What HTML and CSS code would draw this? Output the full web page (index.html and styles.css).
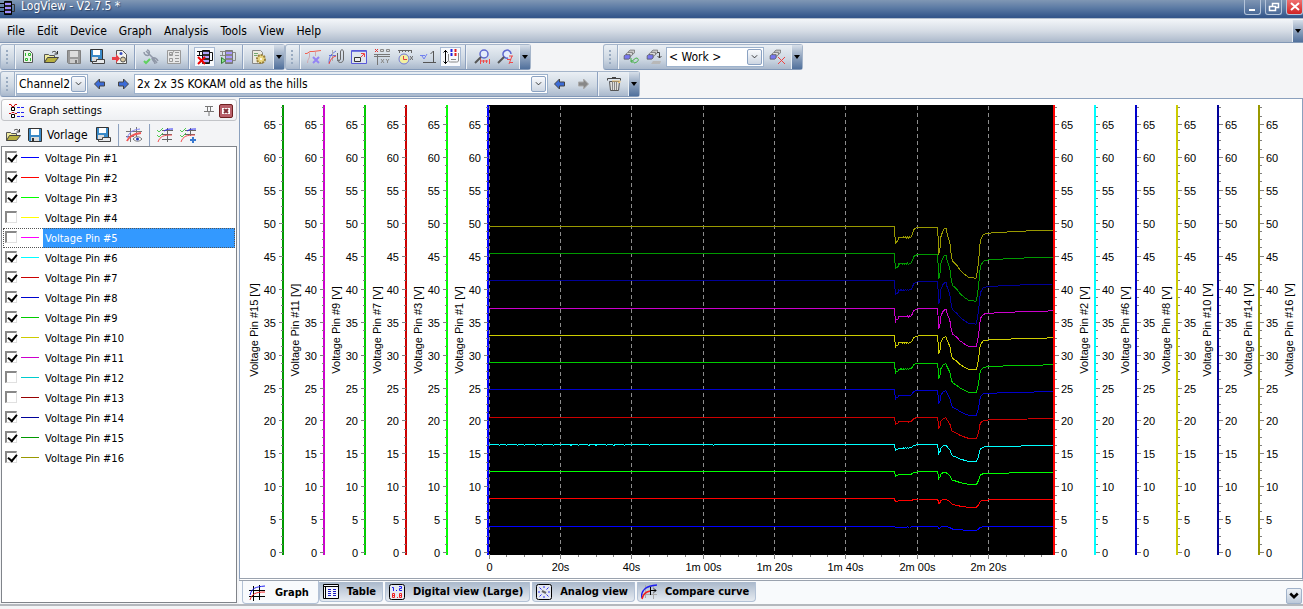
FILE: index.html
```html
<!DOCTYPE html>
<html lang="en">
<head>
    <meta charset="UTF-8">
    <meta name="viewport" content="width=device-width, initial-scale=1.0">
    <title>LogView</title>
    <link rel="stylesheet" href="styles.css">
</head>
<body>
    <!-- icons -->
    <svg class="icons">
        <symbol id="i-app" viewBox="0 0 16 16"><path d="M0 3.500h4M0 7.500h4M0 11.500h4" stroke="#000"/><path d="M4.500 1.500h7v13h-7z" fill="#222" stroke="#000"/><path d="M5 3h6v2H5zM5 7h6v2H5zM5 11h6v2H5z" fill="#a08cff"/><path d="M12 4.500h2.500v7H12" fill="none" stroke="#333"/></symbol>
        <symbol id="i-new" viewBox="0 0 16 16"><path d="M3.500 1.500h6l3 3v9h-9z" fill="#eef6ea" stroke="#555"/><path d="M5.500 4v3M8.500 4.500h2v2h-2zM5.500 9.500h2v2h-2zM10.500 9v3" fill="none" stroke="#2eb82e"/></symbol>
        <symbol id="i-open" viewBox="0 0 16 16"><path d="M1.500 13.500V5.500h4l1 1h5v2" fill="#eeeaa0" stroke="#555"/><path d="M1.500 13.500l3-5h11l-4 5z" fill="#b8b040" stroke="#444"/><path d="M9 3.500c2-2 4-1 5 1M14.500 2v3h-3" fill="none" stroke="#333"/></symbol>
        <symbol id="i-saveoff" viewBox="0 0 16 16"><path d="M1.500 1.500h13v13h-12l-1-1z" fill="#9a9a9a" stroke="#808080"/><path d="M4 2h8v6H4z" fill="#ddd"/><path d="M4 10h8v4H4z" fill="#ccc"/><path d="M9 11h2v3H9z" fill="#777"/></symbol>
        <symbol id="i-save" viewBox="0 0 16 16"><path d="M1.500 1.500h13v13h-12l-1-1z" fill="#3a8ac8" stroke="#333"/><path d="M4 2h8v6H4z" fill="#fff"/><path d="M4 10h8v4H4z" fill="#ddd"/><path d="M5 11h2v3H5z" fill="#333"/></symbol>
        <symbol id="i-saveas" viewBox="0 0 16 16"><path d="M1.500 .5h12v12h-12z" fill="#3a8ac8" stroke="#333"/><path d="M4 1h7v5H4z" fill="#fff"/><path d="M3 8h6v4H3z" fill="#ddd"/><path d="M7.500 10.500h8v4h-12v-2h4z" fill="#e8eaec" stroke="#444"/></symbol>
        <symbol id="i-export" viewBox="0 0 16 16"><path d="M4.500 1.500h6l4 4v9h-10z" fill="#f3f3ee" stroke="#555"/><path d="M0 8h4V5l4 4.500-4 4.500v-3H0z" fill="#e84048"/><circle cx="9" cy="4.500" r="1.500" fill="#3a50c0"/><circle cx="11" cy="10.500" r="2.500" fill="#d8c8a0" stroke="#555"/></symbol>
        <symbol id="i-tools" viewBox="0 0 16 16"><path d="M3 2l3 3 4 4 4 5M1 3c0 3 3 4 5 3M4 1c2 0 3 2 2 4M9 9c0 3 3 3 3 6M9 9c3-1 5 1 6 3" fill="none" stroke="#9098a8" stroke-width="1.500"/><path d="M1 12l2 2 4-4" fill="none" stroke="#60d060" stroke-width="2"/></symbol>
        <symbol id="i-form" viewBox="0 0 16 16"><path d="M1.500 1.500h13v13h-13z" fill="#e8e8e8" stroke="#999"/><path d="M3.500 3.500h3v3h-3zM9 3.500h4M9 6.500h4M3.500 9.500h3v3h-3zM9 9.500h4M9 12.500h4M4 5l1 1 3-4" fill="none" stroke="#999"/></symbol>
        <symbol id="i-disconnect" viewBox="0 0 16 16"><path d="M5.500 1.500h7v13h-7z" fill="#333" stroke="#111"/><path d="M6 3h6v2H6zM6 7h6v2H6zM6 11h6v2H6z" fill="#b0a4ff"/><path d="M0 2.500h5M2.500 3v3M0 6.500h5M13 3.500h2.500v8H13" fill="none" stroke="#111"/><path d="M1 8l7 7M8 8l-7 7" stroke="#f00000" stroke-width="2"/></symbol>
        <symbol id="i-connect" viewBox="0 0 16 16"><path d="M5.500 1.500h7v13h-7z" fill="#888" stroke="#777"/><path d="M6 3h6v2H6zM6 7h6v2H6zM6 11h6v2H6z" fill="#a898ff"/><path d="M0 2.500h5M2.500 3v3M0 6.500h5M13 3.500h2.500v8H13" fill="none" stroke="#888"/><path d="M1.500 8.500l4 3-4 3z" fill="#90e090" stroke="#308030"/></symbol>
        <symbol id="i-gear" viewBox="0 0 16 16"><path d="M1.500 1.500h8l2 2v11h-10z" fill="#ebeae0" stroke="#888"/><circle cx="10" cy="10" r="4" fill="#ecd880" stroke="#98803c" stroke-width="2" stroke-dasharray="2 1"/><circle cx="10" cy="10" r="1" fill="#fff"/><path d="M3 4.500h4M3 6.500h3" stroke="#70a870"/></symbol>
        <symbol id="i-curvex" viewBox="0 0 16 16"><path d="M0 4.500h2l3-2h3l8-1" fill="none" stroke="#f06050"/><path d="M4.500 4v3c0 3-2 3-2 7M10.500 3v4" fill="none" stroke="#d0a8b0"/><path d="M8 8l6 6M14 8l-6 6" stroke="#9484f4" stroke-width="2"/></symbol>
        <symbol id="i-clip" viewBox="0 0 16 16"><path d="M1 14c0-8 3-9 7-12M1 6.500h7" fill="none" stroke="#6070e0"/><path d="M4.500 1v11" stroke="#aaa"/><path d="M1 15c2-6 4-7 7-8" fill="none" stroke="#f04040"/><path d="M9.500 4v6c0 2 3 2 3 0V3c0-3 3-3 3 0v7c0 5-6 4-6 1" fill="none" stroke="#666"/></symbol>
        <symbol id="i-full" viewBox="0 0 16 16"><path d="M.5 1.500h15v13H.5z" fill="#dfe5ee" stroke="#5858d8"/><path d="M1 2.500h14" stroke="#7078e0" stroke-width="1"/><path d="M3.500 8.500h6v4h-6z" fill="#eee" stroke="#333"/><path d="M10 8l3-3M10 4.500h3.500V8" fill="none" stroke="#f04040"/></symbol>
        <symbol id="i-grid" viewBox="0 0 16 16"><path d="M6.500 .5h3v2h-3zM12.500 .5h3v2h-3z" fill="#ddd" stroke="#888"/><path d="M1 0l3 3M4 0L1 3" stroke="#e03030"/><path d="M0 5.500h16M0 7.500h16M3.500 5v11" stroke="#777"/><path d="M7 10l3 4M10 10l-3 4M12 10l1.500 2 1.500-2M13.500 12v2" fill="none" stroke="#888"/></symbol>
        <symbol id="i-clock" viewBox="0 0 16 16"><path d="M1 1.500h14M2.500 1v3M5.500 1v2M8.500 1v2M11.500 1v2M14.500 1v3" stroke="#666"/><circle cx="7" cy="10" r="5" fill="#f4f0a0" stroke="#7078d8"/><path d="M6.500 7v3.500H10" fill="none" stroke="#e04040"/><path d="M13 7l3 4M16 7l-3 4" stroke="#666"/></symbol>
        <symbol id="i-step" viewBox="0 0 16 16"><path d="M0 6.500h5M2 7l2 3 3-5" fill="none" stroke="#7080f0"/><path d="M3 13.500h13M13.500 13V2l-3 3" fill="none" stroke="#555"/></symbol>
        <symbol id="i-axes" viewBox="0 0 16 16"><path d="M2.500 1v14M.5 3.500l2-2 2 2M.5 12.500l2 2 2-2" fill="none" stroke="#000"/><path d="M5.500 5v6c0 2 1 2 2 2h6c1 0 2 0 2-2V4M8 10.500h5" fill="none" stroke="#888"/><path d="M8.500 0v8" stroke="#2020e0" stroke-width="2" stroke-dasharray="3 1"/><path d="M12.500 0v8" stroke="#e02020" stroke-width="2" stroke-dasharray="3 1"/></symbol>
        <symbol id="i-zoomx" viewBox="0 0 16 16"><circle cx="10" cy="5" r="4" fill="#e4ecfa" stroke="#5f68d0" stroke-width="1.500"/><path d="M7 8l-6 6" stroke="#555" stroke-width="2"/><path d="M7 12h7M6.500 10v5M9.500 11v3M12.500 11v3M15.500 10v5" stroke="#f04848"/></symbol>
        <symbol id="i-zoomy" viewBox="0 0 16 16"><path d="M14 5a4 4 0 1 0-3 4" fill="#e4ecfa" stroke="#5f68d0" stroke-width="1.500"/><path d="M7 8l-6 6" stroke="#555" stroke-width="2"/><path d="M12 7h4M10 10.500h4M13 13.500h3M12 15l3-8" stroke="#f04848"/></symbol>
        <symbol id="i-boxes" viewBox="0 0 16 16"><path d="M7.500 3l2-1.500h6V5l-2 1.500h-6z" fill="#ccc" stroke="#666"/><path d="M4.500 6l2-1.500h6V8l-2 1.500h-6z" fill="#ddd" stroke="#666"/><path d="M1.500 9l2-1.500h6V12l-2 1.500h-6z" fill="#7878f0" stroke="#555"/></symbol>
        <symbol id="i-boxload" viewBox="0 0 16 16"><use href="#i-boxes" width="12" height="12"/><path d="M8 12c3 0 3-3 6-3 2 1 2 4-3 5M8 9v4h3" fill="none" stroke="#40b040"/></symbol>
        <symbol id="i-boxsave" viewBox="0 0 16 16"><use href="#i-boxes" width="12" height="12"/><path d="M11 3.500h2.500V9M11.500 7l2 2 2-2" fill="none" stroke="#444"/><path d="M7 12h8l-1 3H5z" fill="#b8b8b8"/></symbol>
        <symbol id="i-boxdel" viewBox="0 0 16 16"><use href="#i-boxes" width="12" height="12"/><path d="M9 8l7 7M16 8l-7 7" stroke="#f04040"/></symbol>
        <symbol id="i-left" viewBox="0 0 12 12"><path d="M.5 6l5-5v3h5v4h-5v3z" fill="#3c6cd8" stroke="#444"/></symbol>
        <symbol id="i-right" viewBox="0 0 12 12"><path d="M11.500 6l-5-5v3h-5v4h5v3z" fill="#3c6cd8" stroke="#444"/></symbol>
        <symbol id="i-rightoff" viewBox="0 0 12 12"><path d="M11.500 6l-5-5v3h-5v4h5v3z" fill="#888" stroke="#aaa"/></symbol>
        <symbol id="i-trash" viewBox="0 0 16 16"><path d="M3.500 5.500h10l-1 9h-8z" fill="#e0e0dc" stroke="#555"/><path d="M1.500 4.500v-2h13v2M6 1.500h4" fill="none" stroke="#444"/><path d="M6.500 6v8M8.500 6v8M10.500 6v8" stroke="#888"/><path d="M6 5h8v1.500h-2" fill="none" stroke="#f0c878"/></symbol>
        <symbol id="i-drop" viewBox="0 0 8 8"><path d="M1 2h6L4 6z" fill="#000"/></symbol>
        <symbol id="i-chev" viewBox="0 0 8 8"><path d="M1 2l3 3 3-3" fill="none" stroke="#222"/></symbol>
        <symbol id="i-settings" viewBox="0 0 16 16"><path d="M0 1.500h2l1 2h2l1-2h2M0 10.500h2l1-1h2l1 1h2" fill="none" stroke="#d01010"/><path d="M2.500 4.500h3v3h-3zM2.500 11.500h3v3h-3z" fill="#fff" stroke="#000"/><path d="M8 4.500h3M12 4.500h3M8 9.500h3M12 9.500h3M8 13.500h3M12 13.500h3" stroke="#2020f0"/></symbol>
        <symbol id="i-pin" viewBox="0 0 12 12"><path d="M2 1.500h8M4.500 2v4M7.500 2v4M1 6.500h10M6 7v4" fill="none" stroke="#777"/></symbol>
        <symbol id="i-eye" viewBox="0 0 16 16"><path d="M4.500 1v14M10.500 0v10M0 4.500h16M0 9.500h8" stroke="#777"/><path d="M1 11C4 4 7 3 14 2" fill="none" stroke="#8080f0"/><path d="M1 14c2-5 6-7 14-8" fill="none" stroke="#f05858" stroke-width="2"/><path d="M7 12c3-3 6-3 9 0-3 3-6 3-9 0z" fill="#fff" stroke="#777"/><circle cx="11.500" cy="12" r="1.500" fill="#2838b0"/></symbol>
        <symbol id="i-curves" viewBox="0 0 16 16"><path d="M10.500 1v14M5 12.500h10M5 7.500h10M5 3.500h11" stroke="#666"/><path d="M7 4c3-2 5-2 9-2" fill="none" stroke="#3030f0"/><path d="M1 15c2-6 6-7 14-7" fill="none" stroke="#f05050"/><path d="M0 3l2 2 4-4M0 8l2 2 4-4" fill="none" stroke="#50c850"/></symbol>
        <symbol id="i-curvesadd" viewBox="0 0 16 16"><path d="M10.500 1v8M5 7.500h10M5 3.500h11" stroke="#666"/><path d="M7 4c3-2 5-2 9-2" fill="none" stroke="#3030f0"/><path d="M1 15c2-6 6-7 14-7" fill="none" stroke="#f05050"/><path d="M0 3l2 2 4-4M0 8l2 2 4-4" fill="none" stroke="#50c850"/><path d="M10 13h6M13 10v6" stroke="#3878d0" stroke-width="2"/></symbol>
        <symbol id="i-graph" viewBox="0 0 16 16"><path d="M4.500 1v15M10.500 0v15M0 5.500h16M0 11.500h16" stroke="#000"/><path d="M1 10C3 3 6 2 16 1" fill="none" stroke="#2020f0"/><path d="M1 15c2-6 5-8 15-8" fill="none" stroke="#f02020"/></symbol>
        <symbol id="i-table" viewBox="0 0 16 16"><path d="M.5 .5h15v14H.5z" fill="#f4f6fc" stroke="#000"/><path d="M1 2.500h14M2.500 3v12" stroke="#000"/><path d="M5 5.500h3M5 7.500h3M5 9.500h3M5 11.500h3M10 5.500h3M10 7.500h3M10 9.500h3M10 11.500h3" stroke="#1818c0"/></symbol>
        <symbol id="i-digital" viewBox="0 0 16 16"><rect x=".5" y=".5" width="15" height="15" rx="2" fill="#e4e8f0" stroke="#000"/><path d="M3 3.500h1.500V7M7 6.500h1M10 2.500h2.500v2h-2v2H13" fill="none" stroke="#2020f0"/><path d="M3.500 9.500h2v4h-2zM3 11.500h3M8 13.500h1M10.500 9.500h2v4h-2zM10 11.500h3" fill="none" stroke="#f02020"/></symbol>
        <symbol id="i-analog" viewBox="0 0 16 16"><rect x=".5" y=".5" width="15" height="15" rx="2" fill="#e4e8f0" stroke="#000"/><path d="M8 2v2M8 12v2M2 8h2M12 8h2M3.500 3.500l2 2M12.500 3.500l-2 2M3.500 12.500l2-2M12.500 12.500l-2-2" stroke="#3030f0"/><path d="M6 7l4 2" stroke="#666" stroke-width="2"/></symbol>
        <symbol id="i-compare" viewBox="0 0 16 16"><path d="M4.500 1v13M0 10.500h16M12.500 2v13" stroke="#aaa"/><path d="M0 14C1 5 5 2 16 1" fill="none" stroke="#2020f0" stroke-width="1.500"/><path d="M1 15c1-5 3-7 8-8" fill="none" stroke="#f02020" stroke-width="1.500"/><path d="M9.500 3v8M9 6.500h6M13 4.500l2 2-2 2" fill="none" stroke="#000"/></symbol>
    </svg>

    <div class="window">
        <header class="titlebar">
            <svg class="icon"><use href="#i-app"/></svg>
            <h1>LogView - V2.7.5 *</h1>
            <div class="winbuttons">
                <button class="winbtn" aria-label="Minimize"><svg viewBox="0 0 16 14"><path d="M4 10h6" stroke="#fff" stroke-width="2"/></svg></button>
                <button class="winbtn" aria-label="Restore"><svg viewBox="0 0 16 14"><path d="M6.500 6V3.500h6v4H10M3.500 6.500h6v4h-6z" fill="none" stroke="#fff" stroke-width="1.500"/></svg></button>
                <button class="winbtn close" aria-label="Close"><svg viewBox="0 0 16 14"><path d="M4 3l8 7M12 3l-8 7" stroke="#fff" stroke-width="2"/></svg></button>
            </div>
        </header>

        <nav class="menubar">
            <button>File</button>
            <button>Edit</button>
            <button>Device</button>
            <button>Graph</button>
            <button>Analysis</button>
            <button>Tools</button>
            <button>View</button>
            <button>Help</button>
            <button class="more" aria-label="More"><svg><use href="#i-drop"/></svg></button>
        </nav>

        <div class="bars">
            <div class="bar">
                <i class="grip"></i>
                <button class="tool" aria-label="New"><svg class="icon"><use href="#i-new"/></svg></button>
                <button class="tool" aria-label="Open"><svg class="icon"><use href="#i-open"/></svg></button>
                <button class="tool" aria-label="Save"><svg class="icon"><use href="#i-saveoff"/></svg></button>
                <button class="tool" aria-label="Save as"><svg class="icon"><use href="#i-saveas"/></svg></button>
                <button class="tool" aria-label="Export"><svg class="icon"><use href="#i-export"/></svg></button>
                <i class="sep"></i>
                <button class="tool" aria-label="Settings"><svg class="icon"><use href="#i-tools"/></svg></button>
                <button class="tool" aria-label="Form"><svg class="icon"><use href="#i-form"/></svg></button>
                <i class="sep"></i>
                <button class="tool on" aria-label="Disconnect"><svg class="icon"><use href="#i-disconnect"/></svg></button>
                <button class="tool" aria-label="Connect"><svg class="icon"><use href="#i-connect"/></svg></button>
                <i class="sep"></i>
                <button class="tool" aria-label="Options"><svg class="icon"><use href="#i-gear"/></svg></button>
                <button class="more" aria-label="More"><svg><use href="#i-drop"/></svg></button>
            </div>
            <div class="bar">
                <i class="grip"></i>
                <button class="tool" aria-label="Remove curve"><svg class="icon"><use href="#i-curvex"/></svg></button>
                <button class="tool" aria-label="Attach"><svg class="icon"><use href="#i-clip"/></svg></button>
                <button class="tool" aria-label="Full size"><svg class="icon"><use href="#i-full"/></svg></button>
                <button class="tool" aria-label="Grid"><svg class="icon"><use href="#i-grid"/></svg></button>
                <button class="tool" aria-label="Time axis"><svg class="icon"><use href="#i-clock"/></svg></button>
                <button class="tool" aria-label="Scale"><svg class="icon"><use href="#i-step"/></svg></button>
                <button class="tool on" aria-label="Axes"><svg class="icon"><use href="#i-axes"/></svg></button>
                <i class="sep"></i>
                <button class="tool" aria-label="Zoom X"><svg class="icon"><use href="#i-zoomx"/></svg></button>
                <button class="tool" aria-label="Zoom Y"><svg class="icon"><use href="#i-zoomy"/></svg></button>
                <button class="more" aria-label="More"><svg><use href="#i-drop"/></svg></button>
            </div>
            <div class="bar work">
                <i class="grip"></i>
                <button class="tool" aria-label="Load workspace"><svg class="icon"><use href="#i-boxload"/></svg></button>
                <button class="tool" aria-label="Save workspace"><svg class="icon"><use href="#i-boxsave"/></svg></button>
                <span class="combo w-work"><select aria-label="Workspace"><option>&lt; Work &gt;</option></select><svg><use href="#i-chev"/></svg></span>
                <button class="tool" aria-label="Delete workspace"><svg class="icon"><use href="#i-boxdel"/></svg></button>
                <button class="more" aria-label="More"><svg><use href="#i-drop"/></svg></button>
            </div>
        </div>
        <div class="bars">
            <div class="bar">
                <i class="grip"></i>
                <span class="combo w-channel"><select aria-label="Channel"><option>Channel2</option></select><svg><use href="#i-chev"/></svg></span>
                <button class="tool" aria-label="Previous channel"><svg class="arrow"><use href="#i-left"/></svg></button>
                <button class="tool" aria-label="Next channel"><svg class="arrow"><use href="#i-right"/></svg></button>
                <span class="combo w-record"><select aria-label="Record"><option>2x 2x 3S KOKAM old as the hills</option></select><svg><use href="#i-chev"/></svg></span>
                <button class="tool" aria-label="Previous record"><svg class="arrow"><use href="#i-left"/></svg></button>
                <button class="tool" aria-label="Next record"><svg class="arrow"><use href="#i-rightoff"/></svg></button>
                <i class="sep"></i>
                <button class="tool" aria-label="Delete"><svg class="icon"><use href="#i-trash"/></svg></button>
                <button class="more" aria-label="More"><svg><use href="#i-drop"/></svg></button>
            </div>
        </div>

        <div class="main">
            <aside class="side">
                <div class="side-head">
                    <svg class="icon"><use href="#i-settings"/></svg>
                    <h2>Graph settings</h2>
                    <button class="pin" aria-label="Pin"><svg class="arrow"><use href="#i-pin"/></svg></button>
                    <button class="side-close" aria-label="Close"><svg viewBox="0 0 12 12"><rect x="2" y="3" width="8" height="6" fill="#fff"/><path d="M4 4l4 4M8 4l-4 4" stroke="#803038" stroke-width="2"/></svg></button>
                </div>
                <div class="side-tools">
                    <button class="tool" aria-label="Open template"><svg class="icon"><use href="#i-open"/></svg></button>
                    <button class="tool template"><svg class="icon"><use href="#i-save"/></svg>Vorlage</button>
                    <button class="tool" aria-label="Save template as"><svg class="icon"><use href="#i-saveas"/></svg></button>
                    <i class="sep"></i>
                    <button class="tool" aria-label="Show curves"><svg class="icon"><use href="#i-eye"/></svg></button>
                    <i class="sep"></i>
                    <button class="tool" aria-label="Check all"><svg class="icon"><use href="#i-curves"/></svg></button>
                    <button class="tool" aria-label="Add curve"><svg class="icon"><use href="#i-curvesadd"/></svg></button>
                </div>
                <ul class="pins" id="pins"></ul>
            </aside>

            <section class="view">
                <div class="chart">
                    <div class="axes" id="axesLeft"></div>
                    <svg class="plot" id="plot"></svg>
                    <div class="axes" id="axesRight"></div>
                </div>
                <div class="tabs">
                    <button class="tab active"><svg class="icon"><use href="#i-graph"/></svg>Graph</button>
                    <button class="tab"><svg class="icon"><use href="#i-table"/></svg>Table</button>
                    <button class="tab"><svg class="icon"><use href="#i-digital"/></svg>Digital view (Large)</button>
                    <button class="tab"><svg class="icon"><use href="#i-analog"/></svg>Analog view</button>
                    <button class="tab"><svg class="icon"><use href="#i-compare"/></svg>Compare curve</button>
                    <button class="tablist" aria-label="All tabs"><svg viewBox="0 0 8 8"><path d="M1 2l3 3 3-3" fill="none" stroke="#000" stroke-width="2"/></svg></button>
                </div>
            </section>
        </div>
    </div>
    <script src="script.js"></script>
</body>
</html>
```
FILE: styles.css
```css
* {
    box-sizing: border-box;
}
body {
    margin: 0;
    background: #f3f4f6;
    color: #000;
    font: 11px/14px "DejaVu Sans Condensed", "DejaVu Sans", sans-serif;
}
button {
    font: inherit;
    color: inherit;
    background: none;
    border: 0;
    padding: 0;
    margin: 0;
    display: flex;
    align-items: center;
    justify-content: center;
}
h1, h2 {
    margin: 0;
    font: inherit;
}
.icons {
    display: none;
}
.icon {
    width: 16px;
    height: 16px;
    flex: none;
}
.arrow {
    width: 12px;
    height: 12px;
}
.window {
    display: flex;
    flex-direction: column;
    min-height: 100vh;
}

/* title bar and menu */
.titlebar {
    display: flex;
    align-items: flex-start;
    gap: 5px;
    height: 19px;
    background: linear-gradient(#8097b4, #5b7aa4 8px, #34568a 17px);
    border-bottom: 1px solid #b4bfcd;
}
.titlebar h1 {
    color: #fff;
    line-height: 12px;
    font-size: 12px;
    text-shadow: 1px 1px 1px #33486a;
}
.winbuttons {
    display: flex;
    gap: 4px;
    margin-left: auto;
}
.winbtn {
    width: 17px;
    height: 15px;
    border: 1px solid #b4c4da;
    border-top: 0;
    border-radius: 0 0 3px 3px;
    background: linear-gradient(#7f95b3, #4a6a98);
}
.winbtn svg {
    width: 16px;
    height: 14px;
    flex: none;
}
.winbtn.close {
    background: linear-gradient(#f07070, #d02424);
}
.menubar {
    display: flex;
    height: 24px;
    padding: 1px 0 0 7px;
    gap: 12px;
    font-size: 12px;
    background: linear-gradient(#f3f6f9, #d5dce5 12px, #acb9cb);
    border-bottom: 1px solid #8298b6;
}
.menubar .more {
    margin-left: auto;
}

/* toolbars */
.bars {
    display: flex;
    padding-top: 1px;
    height: 27px;
}
.bar {
    display: flex;
    align-items: center;
    border: 1px solid #a5b5ca;
    border-bottom-color: #8399b8;
    border-radius: 3px;
    background: linear-gradient(#eaeff4, #cdd7e2 60%, #a9b8cc);
}
.bar.work {
    margin-left: 72px;
}
.grip {
    align-self: stretch;
    width: 14px;
    flex: none;
    border-right: 1px solid #9fb1c8;
    box-shadow: 1px 0 #f2f5f8;
    background: repeating-linear-gradient(#98aac0 0 2px, transparent 2px 4px) 5px 5px / 2px 16px no-repeat;
    margin-right: 1px;
}
.tool {
    width: 23px;
    height: 22px;
    flex: none;
}
.tool.on {
    width: 21px;
    margin: 0 1px;
    height: 20px;
    background: #f7f9fc;
    border: 1px solid #a9bbd4;
}
.sep {
    width: 2px;
    margin: 0 3px;
    align-self: stretch;
    border-left: 1px solid #8ea2c0;
    border-right: 1px solid #eef2f6;
}
.more {
    align-self: stretch;
    width: 11px;
    border-left: 1px solid #e8eef4;
    background: linear-gradient(#d7dfe9, #8ea2bd 50%, #50709c);
}
.bar .more {
    margin-left: 3px;
}
.more svg {
    width: 8px;
    height: 8px;
}
.combo {
    position: relative;
    height: 20px;
    flex: none;
}
.combo select {
    appearance: none;
    width: 100%;
    height: 20px;
    padding: 0 2px;
    background: #fff;
    border: 1px solid #9db2cc;
    border-radius: 0;
    color: #000;
    font: inherit;
    font-size: 12px;
}
/* drop button over the select */
.combo svg {
    position: absolute;
    right: 2px;
    top: 2px;
    width: 15px;
    height: 16px;
    padding: 3px;
    border: 1px solid #8ba2c2;
    border-radius: 2px;
    background: linear-gradient(#fafbfd, #cdd6e2);
    pointer-events: none;
}
.w-channel { width: 72px; }
.w-record { width: 414px; }
.w-work { width: 98px; margin: 0 1px; }

/* side panel */
.main {
    display: flex;
    flex: 1;
    margin: 1px 0 3px;
    border-bottom: 2px solid #b4b8bd;
}
.side {
    display: flex;
    flex-direction: column;
    width: 237px;
    flex: none;
    padding: 1px 0 1px 1px;
}
.side-head {
    display: flex;
    align-items: center;
    height: 22px;
    padding: 1px 3px 0 7px;
    gap: 4px;
    margin-bottom: 3px;
    border: 1px solid #c2c4c8;
    border-radius: 3px;
    background: linear-gradient(#fff, #eef0f3);
}
.side-head h2 {
    line-height: 16px;
}
.pin {
    margin-left: auto;
}
.side-close {
    width: 14px;
    height: 14px;
    border: 1px solid #702020;
    border-radius: 2px;
    background: #b8606a;
}
.side-close svg {
    width: 12px;
    height: 12px;
    flex: none;
}
.side-tools {
    display: flex;
    align-items: center;
    height: 22px;
}
.template {
    width: auto;
    gap: 4px;
    padding: 0 4px 0 3px;
    font-size: 12px;
}
.pins {
    flex: 1;
    list-style: none;
    margin: 0;
    padding: 1px;
    background: #fff;
    border: 1px solid #80848a;
}
.pins label {
    display: flex;
    height: 20px;
    padding-left: 1px;
    align-items: center;
}
.pins input {
    appearance: none;
    width: 12px;
    height: 12px;
    margin: 0 4px 2px 1px;
    flex: none;
    border: 1px solid #e0e0e0;
    border-top: 2px solid #888;
    border-left: 2px solid #888;
}
.pins input:checked::after {
    content: "";
    display: block;
    width: 7px;
    height: 4px;
    margin: 1px 0 0 1px;
    border-left: 2px solid #000;
    border-bottom: 2px solid #000;
    transform: rotate(-50deg);
}
.swatch {
    width: 18px;
    height: 2px;
    margin-right: 4px;
    flex: none;
}
.pins .name {
    flex: 1;
    height: 20px;
    line-height: 21px;
    padding-left: 2px;
}
.pins .selected {
    outline: 1px dotted #555;
    outline-offset: -1px;
}
.pins .selected .name {
    background: #39f;
    color: #fff;
}

/* chart */
.view {
    display: flex;
    flex-direction: column;
    flex: 1;
    min-width: 0;
    margin-left: 2px;
    background: #f8fafc;
}
.chart {
    flex: 1;
    min-height: 300px;
    display: grid;
    grid-template-columns: 246px 1fr 246px;
    padding: 0 3px;
    background: #fff;
    border: 1px solid #8ba0bd;
    border-bottom: 3px double #9aa2ae;
}
.axes {
    display: flex;
}
.axes svg {
    width: 41px;
}
.chart svg {
    display: block;
    height: 100%;
    min-width: 0;
    overflow: visible;
    font: 11px "Liberation Sans", Arial, sans-serif;
}
.plot {
    width: 100%;
}

/* tabs */
.tabs {
    display: flex;
    align-items: flex-start;
    gap: 2px;
    height: 23px;
    padding-left: 3px;
}
.tab {
    height: 20px;
    gap: 8px;
    padding: 0 6px 0 3px;
    margin-top: 1px;
    font-weight: bold;
    border: 1px solid #b3c2d6;
    border-top: 0;
    border-radius: 0 0 4px 4px;
    background: linear-gradient(#a9b8cb, #e6ebf1);
}
.tab.active {
    height: 23px;
    gap: 10px;
    margin: 0 -2px 0 0;
    padding: 1px 9px 0 6px;
    background: #f8fafc;
}
.tablist {
    width: 16px;
    height: 16px;
    margin: 7px 1px 0 auto;
    border: 1px solid #a0b2ca;
    border-radius: 2px;
    background: linear-gradient(#eef2f7, #bcc9d9);
}
.tablist svg {
    width: 10px;
    height: 10px;
}
```
FILE: script.js
```js
// colour of every channel, cell = position in the pack, 0 = not logged
const pins = [
    { n: 1, color: '#0000ff', cell: 1 },
    { n: 2, color: '#ff0000', cell: 2 },
    { n: 3, color: '#00ff00', cell: 3 },
    { n: 4, color: '#ffff00', cell: 0 },
    { n: 5, color: '#ff00ff', cell: 0, selected: true },
    { n: 6, color: '#00ffff', cell: 4 },
    { n: 7, color: '#cc0000', cell: 5 },
    { n: 8, color: '#0000cc', cell: 6 },
    { n: 9, color: '#00cc00', cell: 7 },
    { n: 10, color: '#cccc00', cell: 8 },
    { n: 11, color: '#cc00cc', cell: 9 },
    { n: 12, color: '#00cccc', cell: 0 },
    { n: 13, color: '#990000', cell: 0 },
    { n: 14, color: '#000099', cell: 10 },
    { n: 15, color: '#009900', cell: 11 },
    { n: 16, color: '#999900', cell: 12 }
]
const left = [15, 11, 9, 7, 3, 1]
const right = [2, 6, 8, 10, 14, 16]

// [seconds, voltage drop of one cell]
const drops = [
    [0, 0], [113.7, 0], [113.8, .13], [114, .22], [114.2, .19], [114.6, .19], [114.9, .14],
    [118.2, .14], [118.5, .12], [119.1, .04], [119.9, .02], [120.4, .013], [125.7, .013],
    [126, .215], [126.1, .358], [126.5, .257], [126.7, .13], [127, .09], [127.4, .04],
    [128.1, .025], [128.3, .076], [128.8, .152], [129.2, .215], [129.5, .341], [129.9, .438],
    [131.1, .493], [132, .552], [133.2, .603], [134.5, .649], [136.5, .658], [136.9, .573],
    [137.3, .426], [137.5, .278], [137.8, .173], [138.6, .105], [140, .089], [144.2, .076],
    [151, .06], [158.1, .05]
]
const full = 4.135
const vmax = 68
const vmin = -0.25
const tmax = 158.1
const padTop = 6
const padBottom = 23

const byNumber = n => pins.find(p => p.n === n)

function drawList() {
    document.getElementById('pins').innerHTML = pins.map(p => `
        <li><label class="${p.selected ? 'selected' : ''}">
            <input type="checkbox" ${p.cell ? 'checked' : ''}>
            <svg class="swatch"><path d="M0 .5h18" stroke="${p.color}"/></svg>
            <span class="name">Voltage Pin #${p.n}</span>
        </label></li>`).join('')
}

function drawAxis(pin, side, h) {
    const ph = h - padTop - padBottom
    const y = v => Math.round(padTop + (vmax - v) * ph / (vmax - vmin)) - 0.5
    const isLeft = side === 'left'
    let s = `<rect x="${isLeft ? 39 : 0}" y="${padTop}" width="2" height="${ph}" fill="${pin.color}"/>`
    for (let v = 0; v <= vmax; v += 1.25) {
        const major = v % 5 === 0
        const len = major ? 4 : 2
        s += isLeft
            ? `<path d="M${40 - len} ${y(v)}H40" stroke="#808080"/>`
            : `<path d="M2 ${y(v)}h${len}" stroke="#808080"/>`
        if (major) {
            s += `<text x="${isLeft ? 33 : 8}" y="${y(v) + 4}" text-anchor="${isLeft ? 'end' : 'start'}">${v}</text>`
        }
    }
    const tx = isLeft ? 15 : 35
    const ty = padTop + ph / 2
    s += `<text transform="translate(${tx} ${ty}) rotate(-90)" text-anchor="middle">Voltage Pin #${pin.n} [V]</text>`
    return `<svg>${s}</svg>`
}

function timeLabel(t) {
    if (t === 0) return '0'
    const m = Math.floor(t / 60)
    const s = t % 60
    return m ? `${m}m ${String(s).padStart(2, '0')}s` : `${s}s`
}

function curve(pin, x, y) {
    const pts = []
    drops.forEach(([t, d], i) => {
        // measuring noise of pin 6 in the first minute
        if (pin.n === 6 && i === 1) {
            for (let k = 1; k < 70; k++) {
                const noise = (k * 7 % 5 < 2 && (k < 42 || k % 9 === 0)) ? .15 : 0
                pts.push([k, full * 4 - noise])
                pts.push([k + .5, full * 4])
            }
        }
        pts.push([t, (full - d) * pin.cell])
        // ripple on the load plateau
        if (t === 114.9) {
            for (let r = 115.2; r < 118.1; r += .6) {
                pts.push([r, (full - .15) * pin.cell])
                pts.push([r + .3, (full - .135) * pin.cell])
            }
        }
    })
    const line = pts.map(([t, v]) => x(t).toFixed(1) + ',' + y(v).toFixed(1)).join(' ')
    return `<polyline points="${line}" fill="none" stroke="${pin.color}" shape-rendering="crispEdges"/>`
}

function drawPlot(w, h) {
    const ph = h - padTop - padBottom
    const bottom = padTop + ph
    const x = t => t * w / tmax
    const y = v => padTop + (vmax - v) * ph / (vmax - vmin)
    let s = `<rect y="${padTop}" width="${w}" height="${ph}" fill="#000"/>`
    for (let t = 0; t < tmax; t += 5) {
        const px = Math.floor(x(t)) + 0.5
        const major = t % 20 === 0
        s += `<path d="M${px} ${bottom}v${major ? 4 : 2}" stroke="#808080"/>`
        if (major) {
            s += `<path d="M${px} ${padTop + 1}V${bottom}" stroke="#8c8c8c" stroke-dasharray="4 3"/>`
            s += `<text x="${px}" y="${bottom + 16}" text-anchor="middle">${timeLabel(t)}</text>`
        }
    }
    pins.filter(p => p.cell).forEach(p => { s += curve(p, x, y) })
    document.getElementById('plot').innerHTML = s
}

function draw() {
    const plot = document.getElementById('plot')
    const axesLeft = document.getElementById('axesLeft')
    const axesRight = document.getElementById('axesRight')
    // empty first so the old size does not hold the chart open
    plot.innerHTML = axesLeft.innerHTML = axesRight.innerHTML = ''
    const { width, height } = plot.getBoundingClientRect()
    axesLeft.innerHTML = left.map(n => drawAxis(byNumber(n), 'left', height)).join('')
    drawPlot(width, height)
    axesRight.innerHTML = right.map(n => drawAxis(byNumber(n), 'right', height)).join('')
}

drawList()
draw()
window.addEventListener('resize', draw)
```
